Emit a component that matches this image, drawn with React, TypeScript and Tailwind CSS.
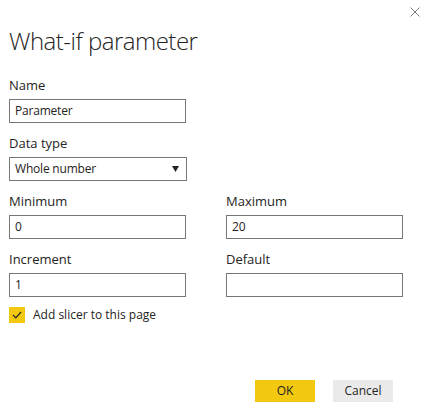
function Field({ label, value, className = "" }: { label: string; value: string; className?: string }) {
  return (
    <div className={"flex flex-col " + className}>
      <label className="text-[13px] leading-[16px] text-[#252423]">{label}</label>
      <div className="mt-[6px] h-[24px] w-[177px] border border-[#777] px-[5px] text-[12px] leading-[22px] tracking-[-0.2px] text-[#252423]">
        {value}
      </div>
    </div>
  );
}

export default function App() {
  return (
    <div
      className="relative h-[410px] w-[426px] bg-white pl-[9px]"
      style={{ fontFamily: '"Open Sans", "Liberation Sans", sans-serif' }}
    >
      {/* close */}
      <button className="absolute right-[6px] top-[7px] text-[#777]" aria-label="Close">
        <svg width="10" height="10" viewBox="0 0 10 10">
          <path d="M0.5 0.5 L9.5 9.5 M9.5 0.5 L0.5 9.5" stroke="currentColor" strokeWidth="1" />
        </svg>
      </button>

      <h1 className="pt-[25px] text-[24px] font-light leading-[32px] tracking-[-0.5px] text-[#252423]">
        What-if parameter
      </h1>

      <Field label="Name" value="Parameter" className="mt-[20px]" />

      <div className="mt-[12px] flex flex-col">
        <label className="text-[13px] leading-[16px] text-[#252423]">Data type</label>
        <div className="mt-[6px] flex h-[24px] w-[178px] items-center justify-between border border-[#777] px-[5px] text-[12px] tracking-[-0.2px] text-[#252423]">
          <span>Whole number</span>
          <svg width="7" height="6" viewBox="0 0 7 6" className="mr-[2px]">
            <path d="M0 0 H7 L3.5 6 Z" fill="#252423" />
          </svg>
        </div>
      </div>

      <div className="mt-[12px] flex gap-[40px]">
        <Field label="Minimum" value="0" />
        <Field label="Maximum" value="20" />
      </div>

      <div className="mt-[12px] flex gap-[40px]">
        <Field label="Increment" value="1" />
        <Field label="Default" value="" />
      </div>

      <div className="mt-[10px] flex items-center gap-[8px]">
        <div className="flex h-[16px] w-[16px] items-center justify-center bg-[#F2C811]">
          <svg width="10" height="8" viewBox="0 0 10 8">
            <path d="M1 4 L3.8 6.8 L9 1" stroke="#252423" strokeWidth="1.2" fill="none" />
          </svg>
        </div>
        <span className="text-[12px] leading-[16px] text-[#252423]">Add slicer to this page</span>
      </div>

      <div className="absolute bottom-[8px] right-[33px] flex gap-[18px]">
        <button className="h-[22px] w-[60px] bg-[#F2C811] text-[12px] text-[#252423]">OK</button>
        <button className="h-[22px] w-[60px] bg-[#EAEAEA] text-[12px] text-[#252423]">Cancel</button>
      </div>
    </div>
  );
}
